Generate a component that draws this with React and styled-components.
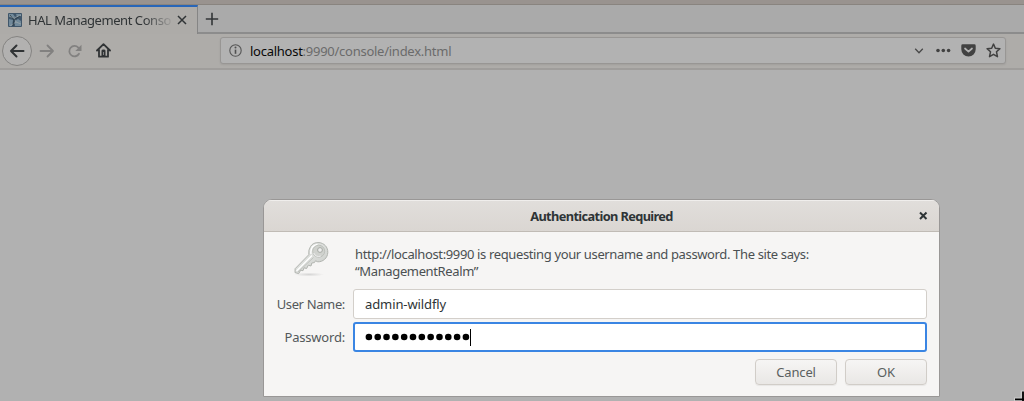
import React from 'react';
import styled, { createGlobalStyle, css } from 'styled-components';

const GlobalStyle = createGlobalStyle`
  * { box-sizing: border-box; }
  body {
    margin: 0;
    overflow: hidden;
    background: #b1b1b1;
    font-family: "Noto Sans", "Open Sans", sans-serif;
    font-size: 13px;
    color: #2e3436;
  }
  svg { display: block; flex: none; }
`;

const Window = styled.div`
  position: relative;
  display: flex;
  flex-direction: column;
  height: 401px;
  overflow: hidden;
`;

const WindowEdge = styled.div`
  height: 5px;
  flex: none;
  background: #99938f;
  border-bottom: 1px solid #89847f;
`;

const TabBar = styled.div`
  display: flex;
  height: 29px;
  flex: none;
  background: #aaaaaa;
`;

const Tab = styled.div`
  display: flex;
  align-items: center;
  width: 198px;
  padding: 0 10px 2px 8px;
  background: #adaba8;
  border-top: 2px solid #2866b8;
  border-right: 1px solid #858585;
`;

const TabTitle = styled.span`
  flex: none;
  width: 150px;
  margin-left: 6px;
  white-space: nowrap;
  line-height: 20px;
  letter-spacing: -0.44px;
  color: #303436;
  mask-image: linear-gradient(to right, #000 116px, transparent 146px);
`;

const TabClose = styled.svg`
  margin: 0 0 0 -1px;
`;

const TabStrip = styled.div`
  flex: 1;
  display: flex;
  align-items: center;
  padding: 0 0 0 7px;
  border-bottom: 2px solid #8c8c8c;
`;

const Toolbar = styled.div`
  display: flex;
  align-items: center;
  height: 36px;
  flex: none;
  padding: 0 18px 1px 2px;
  background: #aeaca9;
  border-bottom: 2px solid #9f9d9b;
`;

const NavButtons = styled.div`
  display: flex;
  align-items: center;
  width: 218px;
`;

const BackButton = styled.div`
  display: grid;
  place-items: center;
  width: 30px;
  height: 30px;
  border: 1px solid #858482;
  border-radius: 50%;
  background: #b2b1b0;
`;

const NavIcon = styled.svg`
  margin-left: ${(p) => p.$gap}px;
`;

const AddressBar = styled.div`
  flex: 1;
  display: flex;
  align-items: center;
  height: 27px;
  padding: 0 4px 0 8px;
  background: #b2b2b2;
  border: 1px solid #989694;
  border-radius: 3px;
  box-shadow: 0 1px 2px rgba(0, 0, 0, 0.08);
`;

const Address = styled.span`
  flex: 1;
  margin-left: 8px;
  line-height: 20px;
  white-space: nowrap;
  letter-spacing: -0.26px;
  color: #6b6b6b;
`;

const Host = styled.span`
  color: #080808;
`;

const AddressActions = styled.div`
  display: flex;
  align-items: center;
  gap: 10px;
`;

const Dialog = styled.section`
  position: absolute;
  left: 263px;
  top: 199px;
  width: 677px;
  height: 198px;
  display: flex;
  flex-direction: column;
  background: #f6f5f4;
  border: 1px solid #999796;
  border-radius: 9px 9px 0 0;
  overflow: hidden;
`;

const DialogHeader = styled.header`
  display: grid;
  grid-template-columns: 32px 1fr 32px;
  align-items: center;
  height: 32px;
  flex: none;
  background: linear-gradient(#e1dedb, #dad6d2);
  border-bottom: 1px solid #c0bbb5;
  box-shadow: inset 0 1px #f0eeec;
`;

const DialogTitle = styled.h1`
  grid-column: 2;
  margin: 0;
  padding-top: 1px;
  text-align: center;
  font-size: 12.8px;
  font-weight: 700;
  line-height: 20px;
  letter-spacing: -0.63px;
  white-space: nowrap;
`;

const Message = styled.div`
  display: flex;
  height: 57px;
  flex: none;
  padding: 9px 0 0 28px;
`;

const MessageText = styled.p`
  margin: 5px 0 0 25px;
  line-height: 17px;
  white-space: nowrap;
  letter-spacing: -0.365px;
  color: #4b5052;
`;

const Field = styled.label`
  display: flex;
  align-items: center;
  flex: none;
  height: 30px;
  margin: 0 12px ${(p) => p.$after}px 0;
`;

const FieldLabel = styled.span`
  width: 81px;
  margin-right: 8px;
  text-align: right;
  line-height: 20px;
  letter-spacing: ${(p) => p.$tracking}px;
  white-space: nowrap;
  color: #53585a;
`;

const FieldBox = styled.span`
  flex: 1;
  display: flex;
  align-items: center;
  height: 30px;
  padding-left: 11px;
  background: #fff;
  border: 1px solid #d3cfca;
  border-radius: 3px;
  letter-spacing: -0.1px;
  ${(p) =>
    p.$focused &&
    css`
      padding-left: 10px;
      border: 2px solid #3a85e3;
    `}
`;

const Caret = styled.i`
  width: 1px;
  height: 17px;
  background: #000;
`;

const Actions = styled.footer`
  display: flex;
  justify-content: flex-end;
  gap: 8px;
  padding-right: 12px;
`;

const Button = styled.button`
  width: 82px;
  height: 26px;
  padding: 0;
  border: 1px solid #d1cdc8;
  border-radius: 4px;
  background: linear-gradient(#f6f5f4, #e9e7e5);
  box-shadow: 0 1px 1px rgba(0, 0, 0, 0.06);
  font: inherit;
  letter-spacing: -0.15px;
  color: #5a5f60;
`;

const Pointer = styled.svg`
  position: absolute;
  right: 0;
  bottom: 0;
`;

const Favicon = () => (
  <svg width="14" height="14" viewBox="0 0 14 14">
    <rect width="14" height="14" rx="1" fill="#40566a" />
    <path d="M1 1h4l2 3-3 1-3-2zM8 1h5v2L9 4zM1 6l4 1-1 6H1zM7 8l3-2 3 2v5H7z" fill="#71899a" />
    <path d="M1 3l5 2 7-3M6 5l2 4-6 4M8 9l5 2" stroke="#a2aaac" strokeWidth=".7" fill="none" />
    <path d="M2 2l4 5 6-4M6 7l-1 6" stroke="#283842" strokeWidth=".8" fill="none" />
  </svg>
);

const KeyIcon = () => (
  <svg width="38" height="36" viewBox="0 0 38 36">
    <defs>
      <linearGradient id="metal" x1="0" y1="0" x2="1" y2="1">
        <stop offset="0" stopColor="#eeefed" />
        <stop offset="1" stopColor="#c7cac6" />
      </linearGradient>
      <radialGradient id="shade">
        <stop offset="0" stopColor="#bbb" stopOpacity=".55" />
        <stop offset="1" stopColor="#bbb" stopOpacity="0" />
      </radialGradient>
    </defs>
    <ellipse cx="17" cy="33.5" rx="15" ry="2" fill="url(#shade)" />
    <path
      d="M18.5 5.5Q21 1.3 27 1.6C32 2 36 6 35.8 11.5C35.6 17 31 21 25.8 20.8L23.5 19.8L22.4 21.6L19.8 22L19 25L16.3 24.2L14.6 27.5L12 26.8L11 29.7L8.7 29.2L6.7 32.6L3 31.6L3.1 27.7L16.8 13.7Q16.2 8.8 18.5 5.5Z"
      fill="url(#metal)" stroke="#b1b4af" strokeLinejoin="round"
    />
    <path d="M4.5 30L20 14.5M19 13Q17.8 5 25.5 3.3" stroke="#fff" strokeWidth="1.3" fill="none" />
    <path d="M6 31L21.5 16.5" stroke="#babdb8" strokeWidth=".8" />
    <circle cx="26.7" cy="10.2" r="6" fill="#d0d2ce" stroke="#bdc0bb" />
    <circle cx="28" cy="9" r="2.4" fill="#eee" stroke="#a6aaa4" />
    <path d="M21.8 12a5 5 0 0 0 7 3" stroke="#eee" fill="none" />
  </svg>
);

const PasswordDots = () => (
  <svg width="105" height="10" viewBox="0 0 105 10" role="img">
    {Array.from({ length: 12 }, (_, i) => (
      <circle key={i} cx={3.9 + i * 8.82} cy="5" r="3.3" fill="#000" />
    ))}
  </svg>
);

export default function App() {
  return (
    <Window>
      <GlobalStyle />
      <WindowEdge />
      <TabBar>
        <Tab>
          <Favicon />
          <TabTitle>HAL Management Conso</TabTitle>
          <TabClose width="10" height="10" viewBox="0 0 10 10">
            <path d="M1 1l8 8M9 1L1 9" stroke="#303436" strokeWidth="1.5" />
          </TabClose>
        </Tab>
        <TabStrip>
          <svg width="14" height="14" viewBox="0 0 14 14">
            <path d="M7 .8v12.4M.8 7h12.4" stroke="#333638" strokeWidth="1.6" />
          </svg>
        </TabStrip>
      </TabBar>
      <Toolbar>
        <NavButtons>
          <BackButton>
            <svg width="16" height="14" viewBox="0 0 16 14">
              <path d="M14.5 7H2M7.5 1.5L2 7l5.5 5.5" stroke="#303335" strokeWidth="2" fill="none" strokeLinecap="round" strokeLinejoin="round" />
            </svg>
          </BackButton>
          <NavIcon $gap={7} width="16" height="14" viewBox="0 0 16 14">
            <path d="M1.5 7H14M8.5 1.5L14 7l-5.5 5.5" stroke="#828180" strokeWidth="1.8" fill="none" strokeLinecap="round" strokeLinejoin="round" />
          </NavIcon>
          <NavIcon $gap={12} width="16" height="14" viewBox="0 0 16 14">
            <path d="M12 9.8A5.2 5.2 0 1 1 11.3 3.6" stroke="#828180" strokeWidth="1.8" fill="none" strokeLinecap="round" />
            <path d="M14.5 .8v6.2H8.3z" fill="#828180" />
          </NavIcon>
          <NavIcon $gap={13} width="15" height="15" viewBox="0 0 15 15">
            <path d="M1 7.5L7.5 1.2L14 7.5M3 7v6.7h9V7" fill="none" stroke="#303335" strokeWidth="1.8" strokeLinecap="round" strokeLinejoin="round" />
            <path d="M5.5 13.5V7.8q0-1.3 2-1.3t2 1.3v5.7z" fill="#303335" />
            <path d="M7.5 9v3" stroke="#999" strokeWidth=".8" />
          </NavIcon>
        </NavButtons>
        <AddressBar>
          <svg width="13" height="13" viewBox="0 0 13 13">
            <circle cx="6.5" cy="6.5" r="5.7" fill="none" stroke="#555" strokeWidth="1.1" />
            <path d="M6.5 5.6v4.2" stroke="#505050" strokeWidth="1.6" />
            <circle cx="6.5" cy="3.5" r="1" fill="#505050" />
          </svg>
          <Address><Host>localhost</Host>:9990/console/index.html</Address>
          <AddressActions>
            <svg width="10" height="7" viewBox="0 0 10 7">
              <path d="M1.2 1.8L5 5.7l3.8-3.9" fill="none" stroke="#484848" strokeWidth="1.3" />
            </svg>
            <svg width="17" height="5" viewBox="0 0 17 5">
              <circle cx="4" cy="2.5" r="1.8" fill="#414141" />
              <circle cx="9.3" cy="2.5" r="1.8" fill="#414141" />
              <circle cx="14.6" cy="2.5" r="1.8" fill="#414141" />
            </svg>
            <svg width="15" height="13" viewBox="0 0 15 13">
              <path d="M1.7 .3h11.6q1.4 0 1.4 1.4v3.6a7.2 7.2 0 0 1-14.4 0V1.7Q.3 .3 1.7 .3z" fill="#414141" />
              <path d="M4 4.5l3.5 3.2L11 4.5" fill="none" stroke="#b2b2b2" strokeWidth="1.7" strokeLinecap="round" strokeLinejoin="round" />
            </svg>
            <svg width="15" height="15" viewBox="0 0 14 14">
              <path d="M7 1l1.7 3.9 4.3.4-3.2 2.9.9 4.6L7 10.6l-3.7 2.2.9-4.6L1 5.3l4.3-.4z" fill="none" stroke="#414141" strokeWidth="1.4" strokeLinejoin="round" />
            </svg>
          </AddressActions>
        </AddressBar>
      </Toolbar>

      <Dialog>
        <DialogHeader>
          <DialogTitle>Authentication Required</DialogTitle>
          <svg width="32" height="10" viewBox="0 0 32 10">
            <path d="M13 1.5l6.5 6.5M19.5 1.500l-6.5 6.500" stroke="#2e3436" strokeWidth="2" />
          </svg>
        </DialogHeader>
        <Message>
          <KeyIcon />
          <MessageText>
            http://localhost:9990 is requesting your username and password. The site says:
            <br />
            “ManagementRealm”
          </MessageText>
        </Message>
        <Field $after={3}>
          <FieldLabel $tracking={-0.36}>User Name:</FieldLabel>
          <FieldBox>admin-wildfly</FieldBox>
        </Field>
        <Field $after={7}>
          <FieldLabel $tracking={-0.2}>Password:</FieldLabel>
          <FieldBox $focused>
            <PasswordDots />
            <Caret />
          </FieldBox>
        </Field>
        <Actions>
          <Button>Cancel</Button>
          <Button>OK</Button>
        </Actions>
      </Dialog>

      <Pointer width="10" height="12" viewBox="0 0 10 12">
        <path d="M0 8.500h6.500V1.500h3.500v10.500H0z" fill="#ccc" />
        <path d="M1 10.300h9M9 2.500v9.500" stroke="#000" strokeWidth="1.800" />
      </Pointer>
    </Window>
  );
}
